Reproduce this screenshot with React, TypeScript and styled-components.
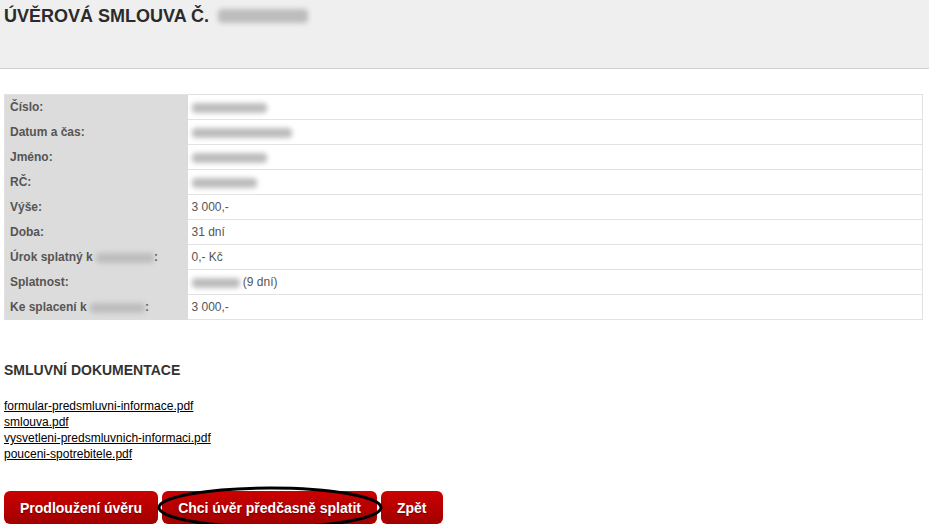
import React from "react";
import styled, { createGlobalStyle } from "styled-components";

const Global = createGlobalStyle`
  html, body { margin: 0; padding: 0; background: #fff; }
  body { font-family: "Liberation Sans", Arial, sans-serif; color: #333; }
`;

const Header = styled.header`
  height: 69px;
  background: #efefef;
  border-bottom: 1px solid #cfcfcf;
  padding: 4px 4px 0;
  box-sizing: border-box;
`;

const Title = styled.h1`
  margin: 0;
  font-size: 18px;
  line-height: 24px;
  font-weight: bold;
  color: #2b2b2b;
  display: flex;
  align-items: center;
  gap: 9px;
`;

const Blur = styled.span<{ $w: number }>`
  display: inline-block;
  width: ${(p) => p.$w}px;
  height: 0.8em;
  background: #bdbdbd;
  border-radius: 4px;
  filter: blur(2.5px);
  vertical-align: middle;
`;

const Main = styled.main`
  padding: 25px 6px 0 4px;
`;

const Table = styled.table`
  width: 100%;
  border-collapse: collapse;
  border: 1px solid #e2e2e2;
  font-size: 12px;
`;

const Row = styled.tr`
  height: 25px;
`;

const Label = styled.th`
  width: 183px;
  box-sizing: border-box;
  background: #dcdcdc;
  color: #555;
  font-weight: bold;
  text-align: left;
  padding: 0 0 0 5px;
  white-space: nowrap;
  border-bottom: 1px solid #dcdcdc;
`;

const Value = styled.td`
  color: #555;
  padding: 0 0 0 4px;
  border-bottom: 1px solid #e2e2e2;
  background: #fff;
`;

const SectionTitle = styled.h2`
  margin: 42px 0 0;
  font-size: 14px;
  line-height: 16px;
  font-weight: bold;
  color: #333;
`;

const Docs = styled.div`
  margin-top: 20px;
  display: flex;
  flex-direction: column;
`;

const DocLink = styled.a`
  font-size: 12px;
  line-height: 16px;
  color: #000;
  text-decoration: underline;
  align-self: flex-start;
`;

const Buttons = styled.div`
  margin-top: 29px;
  display: flex;
  gap: 4px;
`;

const ButtonWrap = styled.div`
  position: relative;
`;

const Button = styled.button`
  height: 33px;
  padding: 0 16px;
  border: none;
  border-radius: 6px;
  background: linear-gradient(#cc0000, #a10000);
  color: #fff;
  font-family: "Liberation Sans", Arial, sans-serif;
  font-size: 14px;
  font-weight: bold;
  text-shadow: 0 1px 1px rgba(0, 0, 0, 0.4);
  cursor: pointer;
`;

const Ellipse = styled.svg`
  position: absolute;
  left: -5px;
  top: -5px;
  width: 226px;
  height: 43px;
  pointer-events: none;
  overflow: visible;
`;

const rows: { label: React.ReactNode; value: React.ReactNode }[] = [
  { label: "Číslo:", value: <Blur $w={75} /> },
  { label: "Datum a čas:", value: <Blur $w={100} /> },
  { label: "Jméno:", value: <Blur $w={75} /> },
  { label: "RČ:", value: <Blur $w={65} /> },
  { label: "Výše:", value: "3 000,-" },
  { label: "Doba:", value: "31 dní" },
  { label: <>Úrok splatný k <Blur $w={58} />:</>, value: "0,- Kč" },
  { label: "Splatnost:", value: <><Blur $w={48} /> (9 dní)</> },
  { label: <>Ke splacení k <Blur $w={55} />:</>, value: "3 000,-" },
];

const docs = [
  "formular-predsmluvni-informace.pdf",
  "smlouva.pdf",
  "vysvetleni-predsmluvnich-informaci.pdf",
  "pouceni-spotrebitele.pdf",
];

export default function App() {
  return (
    <>
      <Global />
      <Header>
        <Title>
          ÚVĚROVÁ SMLOUVA Č. <Blur $w={90} />
        </Title>
      </Header>
      <Main>
        <Table>
          <tbody>
            {rows.map((r, i) => (
              <Row key={i}>
                <Label>{r.label}</Label>
                <Value>{r.value}</Value>
              </Row>
            ))}
          </tbody>
        </Table>
        <SectionTitle>SMLUVNÍ DOKUMENTACE</SectionTitle>
        <Docs>
          {docs.map((d) => (
            <DocLink key={d} href="#">
              {d}
            </DocLink>
          ))}
        </Docs>
        <Buttons>
          <Button>Prodloužení úvěru</Button>
          <ButtonWrap>
            <Button>Chci úvěr předčasně splatit</Button>
            <Ellipse viewBox="0 0 226 43">
              <ellipse cx="113" cy="21.5" rx="111" ry="19.5" fill="none" stroke="#000" strokeWidth="3" />
            </Ellipse>
          </ButtonWrap>
          <Button>Zpět</Button>
        </Buttons>
      </Main>
    </>
  );
}
